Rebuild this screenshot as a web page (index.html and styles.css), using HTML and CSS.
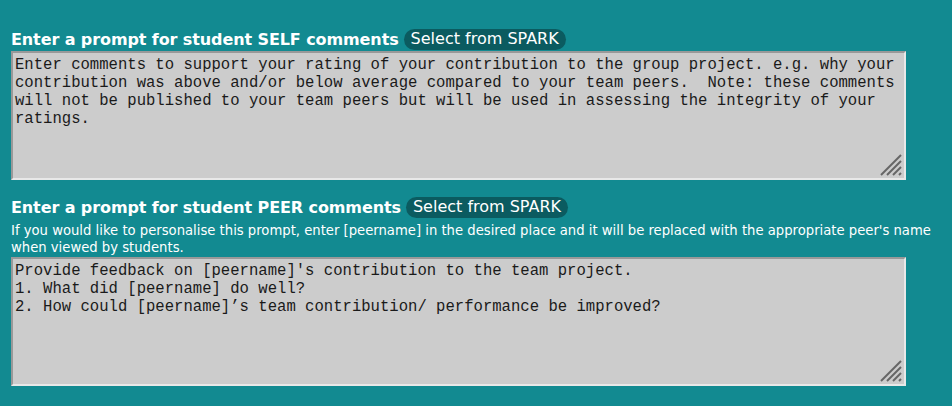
FILE: index.html
```html
<!DOCTYPE html>
<html>
<head>
<meta charset="utf-8">
<link rel="stylesheet" href="styles.css">
</head>
<body>
<div class="page">
  <section class="block block-self">
    <div class="head">
      <h2 class="title">Enter a prompt for student SELF comments</h2>
      <button class="spark">Select from SPARK</button>
    </div>
    <div class="field">
      <textarea class="box">Enter comments to support your rating of your contribution to the group project. e.g. why your contribution was above and/or below average compared to your team peers.  Note: these comments will not be published to your team peers but will be used in assessing the integrity of your ratings.</textarea>
      <svg class="grip" width="22" height="22" viewBox="0 0 22 22"><g stroke="#666" stroke-width="2"><line x1="1" y1="21" x2="21" y2="1"/><line x1="7" y1="21" x2="21" y2="7"/><line x1="13" y1="21" x2="21" y2="13"/><line x1="19" y1="21" x2="21" y2="19"/></g></svg>
    </div>
  </section>
  <section class="block block-peer">
    <div class="head">
      <h2 class="title">Enter a prompt for student PEER comments</h2>
      <button class="spark">Select from SPARK</button>
    </div>
    <p class="note">If you would like to personalise this prompt, enter [peername] in the desired place and it will be replaced with the appropriate peer's name when viewed by students.</p>
    <div class="field">
      <textarea class="box">Provide feedback on [peername]'s contribution to the team project.
1. What did [peername] do well?
2. How could [peername]’s team contribution/ performance be improved?</textarea>
      <svg class="grip" width="22" height="22" viewBox="0 0 22 22"><g stroke="#666" stroke-width="2"><line x1="1" y1="21" x2="21" y2="1"/><line x1="7" y1="21" x2="21" y2="7"/><line x1="13" y1="21" x2="21" y2="13"/><line x1="19" y1="21" x2="21" y2="19"/></g></svg>
    </div>
  </section>
</div>
</body>
</html>
```
FILE: styles.css
```css
html, body {
  margin: 0;
  padding: 0;
  background: #128a91;
}
body {
  font-family: "DejaVu Sans", Verdana, sans-serif;
  color: #fff;
  width: 952px;
  height: 406px;
  overflow: hidden;
}
.page {
  padding: 28px 0 0 11px;
  display: flex;
  flex-direction: column;
  gap: 16px;
}
.block {
  display: flex;
  flex-direction: column;
}
.head {
  display: flex;
  align-items: center;
  gap: 5px;
  height: 22px;
  margin-bottom: 1px;
}
.title {
  margin: 0;
  font-size: 16px;
  letter-spacing: -0.1px;
  font-weight: bold;
  color: #fff;
  white-space: nowrap;
}
.spark {
  font-family: "DejaVu Sans", Verdana, sans-serif;
  font-size: 16px;
  color: #fff;
  background: #0b5b60;
  border: none;
  border-radius: 11px;
  padding: 1px 7px 2px;
  height: 21px;
  line-height: 18px;
  cursor: pointer;
}
.note {
  margin: 3px 0 1px;
  font-size: 13.2px;
  line-height: 17px;
  color: #fff;
  width: 935px;
}
.field {
  position: relative;
  width: 895px;
  height: 129px;
}
.box {
  box-sizing: border-box;
  width: 895px;
  height: 129px;
  margin: 0;
  padding: 3px 2px 1px;
  background: #cccccc;
  color: #1a1a1a;
  font-family: "Liberation Mono", "Courier New", monospace;
  font-size: 15.6px;
  line-height: 18px;
  border-style: solid;
  border-width: 2px;
  border-color: #999 #e8e8e8 #e8e8e8 #999;
  resize: none;
  outline: none;
  overflow: hidden;
  display: block;
}
.grip {
  position: absolute;
  right: 4px;
  bottom: 4px;
}
```
